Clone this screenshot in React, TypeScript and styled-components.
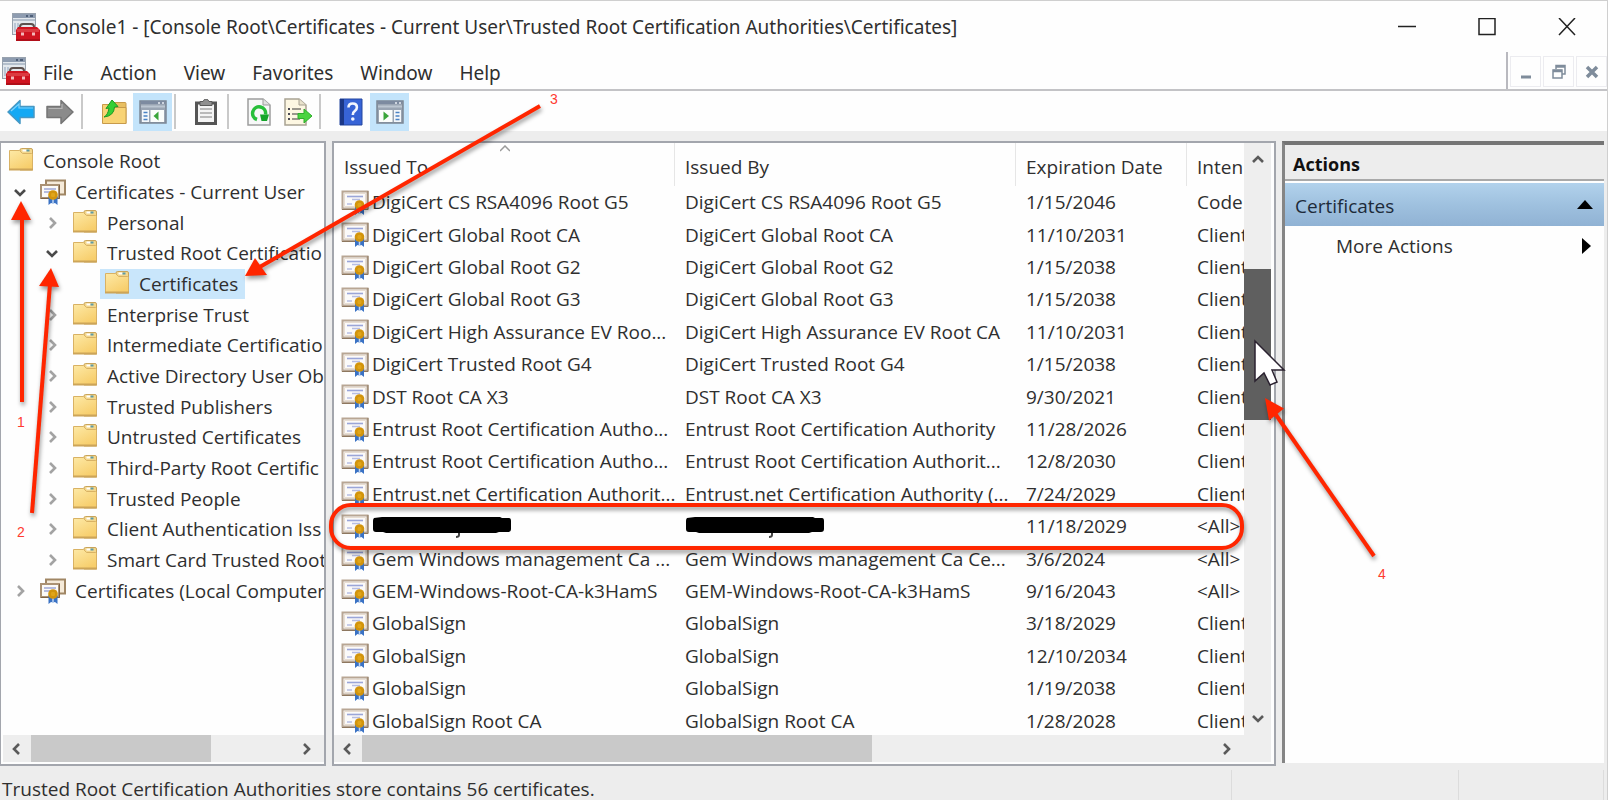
import React from "react";
import styled, { createGlobalStyle, css } from "styled-components";

const GlobalStyle = createGlobalStyle`
  * { box-sizing: border-box; }
  body { margin: 0; background: #ededed; }
  button { font: inherit; color: inherit; border: 0; padding: 0; margin: 0; background: none; }
  svg { display: block; flex: none; }
`;

const Shell = styled.div`
  position: relative;
  display: flex;
  flex-direction: column;
  min-height: 100vh;
  overflow: hidden;
  background: #ededed;
  color: #2f2f2f;
  border-top: 1px solid #cfcfcf;
  border-right: 1px solid #cfcfcf;
  font-family: "Open Sans", "Noto Sans", sans-serif;
  font-size: 19px;
  line-height: 26px;
  white-space: nowrap;
`;

const TitleBar = styled.header`
  display: flex;
  align-items: center;
  height: 51px;
  padding-left: 12px;
  background: #fefefe;
  font-family: "Noto Sans", sans-serif;
`;

const Title = styled.h1`
  flex: 1;
  margin: 0;
  padding: 1px 0 0 5px;
  font-size: 19px;
  font-weight: 400;
`;

const CaptionButton = styled.button`
  display: grid;
  place-items: center;
  width: 80px;
  height: 50px;
`;

const MenuBar = styled.nav`
  display: flex;
  align-items: center;
  height: 39px;
  padding-left: 2px;
  background: #fefefe;
  border-bottom: 2px solid #c3c3c6;
  font-family: "Noto Sans", sans-serif;
`;

const MenuItems = styled.div`
  flex: 1;
  display: flex;
  gap: 1px;
  padding-top: 4px;
`;

const MenuItem = styled.button`
  padding: 0 13px;
`;

const ChildWindowButtons = styled.div`
  display: flex;
  align-self: stretch;
  align-items: center;
  gap: 2px;
  padding: 2px 0 0 2px;
  border-left: 2px solid #b9b9bf;
`;

const ChildWindowButton = styled.button`
  display: grid;
  place-items: center;
  width: 31px;
  height: 31px;
  border: 1px solid #ececf0;
`;

const ToolBar = styled.div`
  display: flex;
  align-items: center;
  height: 40px;
  padding: 1px 2px 0 1px;
  background: #fefefe;
`;

const ToolButton = styled.button<{ $on?: boolean }>`
  display: grid;
  place-items: center;
  width: 39px;
  height: 38px;
  background: ${(p) => (p.$on ? "#c3e4fb" : "none")};
`;

const ToolDivider = styled.span<{ $after?: number }>`
  width: 2px;
  height: 35px;
  margin: 0 ${(p) => p.$after ?? 10}px 0 2px;
  background: #c9c9c9;
`;

const Panes = styled.main`
  flex: 1;
  display: grid;
  grid-template-columns: 326px minmax(0, 1fr) 322px;
  gap: 6px;
  padding: 10px 3px 2px 0;
`;

const TreePane = styled.section`
  display: flex;
  flex-direction: column;
  min-width: 0;
  padding: 3px 0 2px 2px;
  background: #fefefe;
  border: 2px solid #a3a6ad;
  border-left-width: 1px;
  overflow: hidden;
`;

const Tree = styled.ul`
  display: flex;
  flex-direction: column;
  height: 460px;
  margin: 0 0 auto;
  padding: 0;
  list-style: none;
  overflow: hidden;
`;

const TreeRow = styled.li<{ $level: number }>`
  flex: 1;
  display: flex;
  align-items: center;
  padding-left: ${(p) => p.$level * 32 + 1}px;
`;

const TreeToggle = styled.button`
  display: grid;
  place-items: center;
  flex: none;
  width: 24px;
  height: 24px;
  margin: 0 4px 0 -28px;
`;

const TreeLabel = styled.button<{ $selected?: boolean }>`
  flex: none;
  display: flex;
  align-items: center;
  align-self: stretch;
  gap: 8px;
  padding: 0 7px 0 3px;
  background: ${(p) => (p.$selected ? "#c9e6fb" : "none")};
`;

const HScroll = styled.div`
  display: flex;
  align-items: stretch;
  height: 27px;
  padding-right: 4px;
  background: #eeeeee;
`;

const ScrollArrow = styled.button<{ $tall?: boolean }>`
  display: grid;
  place-items: center;
  width: ${(p) => (p.$tall ? 27 : 28)}px;
  height: ${(p) => (p.$tall ? 34 : 27)}px;
`;

const HTrack = styled.div`
  flex: 1;
`;

const HThumb = styled.div<{ $share: number }>`
  width: ${(p) => p.$share}%;
  height: 27px;
  background: #c9c9c9;
`;

const ListPane = styled.section`
  display: grid;
  grid-template-columns: minmax(0, 1fr) 27px;
  grid-template-rows: minmax(0, 1fr) 27px;
  min-width: 0;
  padding: 0 3px 2px 0;
  background: #fefefe;
  border: 2px solid #a3a6ad;
`;

const TableClip = styled.div`
  height: 592px;
  overflow: hidden;
`;

const CertTable = styled.table`
  width: 100%;
  height: 594px;
  table-layout: fixed;
  border-collapse: separate;
  border-spacing: 0;
`;

const Column = styled.col<{ $width?: number }>`
  ${(p) => p.$width && css`width: ${p.$width}px;`}
`;

const HeadCell = styled.th`
  position: relative;
  height: 43px;
  padding: 4px 0 0 10px;
  font-weight: 400;
  text-align: left;
  overflow: hidden;
  border-right: 1px solid #e6e6e6;
  &:last-child { border-right: 0; }
`;

const SortMark = styled.svg`
  position: absolute;
  top: 2px;
  left: 50%;
  margin-left: -4px;
`;

const Cell = styled.td`
  padding: 0 0 0 10px;
  overflow: hidden;
`;

const NameCell = styled(Cell)`
  padding-left: 7px;
`;

const NameContent = styled.div`
  display: flex;
  align-items: center;
  gap: 3px;
`;

const VScroll = styled.div`
  display: flex;
  flex-direction: column;
  background: #eeeeee;
`;

const VTrack = styled.div`
  flex: 1;
  padding-top: 92px;
`;

const VThumb = styled.div`
  height: 151px;
  background: #5f5f5f;
`;

const ScrollCorner = styled.div`
  background: #eeeeee;
`;

const ActionsPane = styled.aside`
  display: flex;
  flex-direction: column;
  background: #fefefe;
  border-top: 4px solid #757575;
  border-left: 3px solid #858585;
  margin-bottom: 3px;
`;

const ActionsHeading = styled.h2`
  margin: 0 0 2px;
  padding: 6px 8px 2px;
  background: #ededed;
  border-bottom: 2px solid #a9a9a9;
  font-size: 18px;
  line-height: 26px;
  font-weight: 700;
  color: #111;
`;

const ActionsGroup = styled.button`
  display: flex;
  align-items: center;
  justify-content: space-between;
  height: 43px;
  padding: 2px 11px 0 10px;
  color: #1d2b3a;
  background: linear-gradient(#b2d2ec, #9fc1df 50%, #90b2d4);
`;

const ActionsItem = styled.button`
  display: flex;
  align-items: center;
  justify-content: space-between;
  height: 40px;
  padding: 0 13px 0 51px;
`;

const StatusBar = styled.footer`
  display: flex;
  height: 32px;
  padding: 2px 3px 0 0;
`;

const StatusPart = styled.div<{ $width?: number }>`
  ${(p) => (p.$width ? css`width: ${p.$width}px;` : css`flex: 1;`)}
  padding: 8px 0 0 2px;
  line-height: 22px;
  border-right: 1px solid #dcdcdc;
`;

const Annotations = styled.div`
  position: absolute;
  inset: -1px 0 0 0;
  pointer-events: none;
  overflow: hidden;
`;

const ArrowLayer = styled.svg`
  filter: drop-shadow(1px 3px 2px rgba(0, 0, 0, 0.4));
`;

const StepNumber = styled.span<{ $x: number; $y: number }>`
  position: absolute;
  left: ${(p) => p.$x}px;
  top: ${(p) => p.$y}px;
  font: 14px/16px "Liberation Sans", sans-serif;
  color: #ff3b30;
`;

const Pointer = styled.svg`
  position: absolute;
  left: 1253px;
  top: 339px;
`;

function ConsoleIcon() {
  return (
    <svg width="28" height="28" viewBox="0 0 28 28" aria-hidden="true">
      <rect x="0.5" y="0.5" width="23" height="21" fill="#e3e8ed" stroke="#98a2ae" />
      <rect x="1" y="1" width="22" height="4" fill="#8e9cb0" />
      <path d="M14 3h2M18 3h3" stroke="#4f6079" strokeWidth="2" />
      <path d="M1 7h22" stroke="#b4bfcc" strokeWidth="2" />
      <path d="M3 10v9M6 10v9" stroke="#8fa3bd" strokeWidth="1" />
      <path d="M8 17v-3q0-3 3-3h8q3 0 3 3v3" fill="none" stroke="#5c504d" strokeWidth="2" />
      <path d="M4 17l2-3h19l3 3v11H4z" fill="#cf1420" />
      <path d="M5 16h22v3H5z" fill="#dc3a40" />
      <path d="M4 26h24v2H4z" fill="#b00f19" />
      <path d="M9 19.500h3v3H9zM20 19.500h3v3h-3z" fill="#f3b9b9" />
    </svg>
  );
}

function FolderIcon() {
  return (
    <svg width="28" height="28" viewBox="0 0 28 28" aria-hidden="true">
      <defs>
        <linearGradient id="folder" x1="0" y1="0" x2="0.600" y2="1">
          <stop offset="0" stopColor="#fde9a6" />
          <stop offset="1" stopColor="#f7ce6c" />
        </linearGradient>
      </defs>
      <path d="M13 5V3q0-1.500 1.500-1.500h9.500q1.500 0 1.500 1.500v20H13z" fill="#f3d78c" stroke="#c9a45a" />
      <path d="M15.500 3.500h4" stroke="#fff" strokeWidth="2" />
      <path d="M19.500 3.500h3" stroke="#5d9aa6" strokeWidth="2" />
      <path d="M2.500 3.500h10l3 3h9q1 0 1 1V22.500h-23z" fill="url(#folder)" stroke="#d9b264" />
      <path d="M2 22.500h24" stroke="#cda558" strokeWidth="2" />
    </svg>
  );
}

function Ribbon({ x, y }: { x: number; y: number }) {
  return (
    <g transform={`translate(${x} ${y})`}>
      <path d="M-4.500 1h9v9l-2.500-2-2 .500-2-.500-2.500 2z" fill="#3a72c4" />
      <path d="M0 3v6" stroke="#bcd3f2" strokeWidth="1.500" />
      <circle r="4.800" fill="#d2940c" />
      <circle r="2.200" fill="#e0a51a" />
    </g>
  );
}

function CertIcon() {
  return (
    <svg width="28" height="25" viewBox="0 0 28 25" aria-hidden="true">
      <path d="M1.500 1.500h25v17h-25z" fill="#fbfaf9" stroke="#b8a694" strokeWidth="2" />
      <path d="M27 1v18.500H1" fill="none" stroke="#8d775f" strokeWidth="1" />
      <path d="M3.500 3.500h21v13h-21z" fill="none" stroke="#e8ddd2" />
      <path d="M6 6.500h16" stroke="#9aa5d8" strokeWidth="1.600" />
      <path d="M11 9.500h8M6 14h5" stroke="#b6bde2" strokeWidth="1.600" />
      <Ribbon x={18.500} y={15} />
    </svg>
  );
}

function CertStoreIcon() {
  return (
    <svg width="28" height="28" viewBox="0 0 28 28" aria-hidden="true">
      <path d="M7 2.500h19v14H7z" fill="#f5ead9" stroke="#a08664" strokeWidth="2" />
      <path d="M2 7h18v13H2z" fill="#fcfaf7" stroke="#ab9274" strokeWidth="2" />
      <path d="M20.500 7v13.500H2" fill="none" stroke="#7d6244" strokeWidth="1" />
      <path d="M5 11h12M5 14h6" stroke="#9fa8d6" strokeWidth="1.500" />
      <Ribbon x={14} y={17} />
    </svg>
  );
}

type Direction = "up" | "down" | "left" | "right";
const chevrons: Record<Direction, string> = {
  up: "M2 9l5-5 5 5",
  down: "M2 5l5 5 5-5",
  left: "M9 2L4 7l5 5",
  right: "M5 2l5 5-5 5",
};

function Chevron({ to, color = "#5a5a5a" }: { to: Direction; color?: string }) {
  return (
    <svg width="14" height="14" viewBox="0 0 14 14" aria-hidden="true">
      <path d={chevrons[to]} fill="none" stroke={color} strokeWidth="2.600" />
    </svg>
  );
}

function BackIcon() {
  return (
    <svg width="28" height="26" viewBox="0 0 28 26" aria-hidden="true">
      <path d="M1 13L13 1.500V7.500h14v11H13v6z" fill="#14a9f4" stroke="#4798c4" strokeWidth="1.500" strokeLinejoin="round" />
      <path d="M4 12l8-7v4h14" fill="none" stroke="#7fd2fb" strokeWidth="1.200" />
    </svg>
  );
}

function ForwardIcon() {
  return (
    <svg width="28" height="26" viewBox="0 0 28 26" aria-hidden="true">
      <path d="M27 13L15 1.500V7.500H1v11h14v6z" fill="#8b8b8b" stroke="#757575" strokeWidth="1.500" strokeLinejoin="round" />
      <path d="M2.500 9.500H16V5" fill="none" stroke="#b5b5b5" strokeWidth="1.200" />
    </svg>
  );
}

function UpFolderIcon() {
  return (
    <svg width="26" height="26" viewBox="0 0 26 26" aria-hidden="true">
      <path d="M13 3.500h11q1 0 1 1v20H13z" fill="#e8bf62" stroke="#c79a4b" />
      <path d="M1.500 5.500h10l2 3h11.500v16H1.500z" fill="#f8d375" stroke="#c79a4b" />
      <path d="M3 18q4-2 5-9l-3 .500L11 1l6 6.500-3.500 .500Q13 17 3 18z" fill="#35cf35" stroke="#1d9a22" />
    </svg>
  );
}

function PanelIcon({ side }: { side: "left" | "right" }) {
  const left = side === "left";
  return (
    <svg width="28" height="24" viewBox="0 0 28 24" aria-hidden="true">
      <path d="M1 1h26v22H1z" fill="#9aa5b3" stroke="#7c8795" strokeWidth="1.500" />
      <path d="M2 2.500h24" stroke="#7d8ba0" strokeWidth="3" />
      <path d="M19 3h2M23 3h2" stroke="#e9eef4" strokeWidth="1.500" />
      <path d="M2 6.500h24" stroke="#bcc6d1" strokeWidth="2" />
      <path d={left ? "M3 10h7v12H3z" : "M18 10h7v12h-7z"} fill="#f4f7fa" />
      <path d={left ? "M11.500 10H25v12H11.500z" : "M3 10h13.500v12H3z"} fill="#fbfdfb" />
      <path d={left ? "M4.500 12.500h4M4.500 16h4M4.500 19.500h4" : "M19.500 12.500h4M19.500 16h4M19.500 19.500h4"} stroke="#4a82c4" strokeWidth="1.600" />
      <path d={left ? "M19.500 11.500v9l-5-4.500z" : "M7.500 11.500v9l5.500-4.500z"} fill="#3aa53a" />
    </svg>
  );
}

function ClipboardIcon() {
  return (
    <svg width="22" height="26" viewBox="0 0 22 26" aria-hidden="true">
      <path d="M1.500 4h19v20.500h-19z" fill="#f4f4f4" stroke="#555" strokeWidth="3" />
      <path d="M5 4.500V2.500h3Q9 0 11 0t3 2.500h3v4H5z" fill="#8f8f8f" stroke="#5a5a5a" />
      <path d="M5 10h12M5 14h12M5 18h12" stroke="#a5a5a5" strokeWidth="1.500" />
    </svg>
  );
}

function RefreshIcon() {
  return (
    <svg width="24" height="28" viewBox="0 0 24 28" aria-hidden="true">
      <path d="M1 1h15l7 6v20H1z" fill="#f7f8f8" stroke="#9d9d9d" strokeWidth="1.500" />
      <path d="M16 1v6h7" fill="#e1e1e1" stroke="#9d9d9d" />
      <path d="M10 21.500a6.500 6.500 0 1 1 8.500-5" fill="none" stroke="#27bf3a" strokeWidth="3.500" />
      <path d="M13 16.500l9 0-2 6.500h-5.500z" fill="#15a52a" />
    </svg>
  );
}

function ExportIcon() {
  return (
    <svg width="28" height="28" viewBox="0 0 28 28" aria-hidden="true">
      <path d="M1 1h14l7 6v20H1z" fill="#fdf7e2" stroke="#a8a293" strokeWidth="1.500" />
      <path d="M15 1v6h7" fill="#e9e2cc" stroke="#a8a293" />
      <path d="M4 11h2M4 16h2M4 21h2" stroke="#4a4a55" strokeWidth="2" />
      <path d="M8 11h9M8 16h6M8 21h8" stroke="#9b978c" strokeWidth="1.800" />
      <path d="M14 15.500h6V11l8 7-8 7v-4.500h-6z" fill="#4bd43f" stroke="#2fae2c" />
    </svg>
  );
}

function HelpIcon() {
  return (
    <svg width="24" height="28" viewBox="0 0 24 28" aria-hidden="true">
      <path d="M1 1h22v26H1z" fill="#3763d6" stroke="#24479f" />
      <path d="M1 1h4v26H1z" fill="#1b3787" />
      <path d="M9.500 9.500q0-4 4.200-4t4.200 3.800q0 2.500-2.200 3.900-1.900 1.200-1.900 3.800" fill="none" stroke="#f3f6ff" strokeWidth="2.600" />
      <circle cx="13.800" cy="21" r="1.800" fill="#f3f6ff" />
    </svg>
  );
}

function Redaction() {
  return (
    <svg width="142" height="26" viewBox="0 0 142 26" role="img" aria-label="Redacted">
      <path d="M87 19v3q0 2-3 2" fill="none" stroke="#444" strokeWidth="2" />
      <path d="M2 5l8-1h118l2 1h7q2 0 2 3v8q0 3-3 3h-9l-3 1H14l-3-1H4q-3 0-3-3V8q0-2 1-3z" fill="#000" />
    </svg>
  );
}

type Node = { text: string; level: number; kind?: "store"; open?: boolean; closed?: boolean; selected?: boolean };
const nodes: Node[] = [
  { text: "Console Root", level: 0 },
  { text: "Certificates - Current User", level: 1, kind: "store", open: true },
  { text: "Personal", level: 2, closed: true },
  { text: "Trusted Root Certificatio", level: 2, open: true },
  { text: "Certificates", level: 3, selected: true },
  { text: "Enterprise Trust", level: 2, closed: true },
  { text: "Intermediate Certificatio", level: 2, closed: true },
  { text: "Active Directory User Ob", level: 2, closed: true },
  { text: "Trusted Publishers", level: 2, closed: true },
  { text: "Untrusted Certificates", level: 2, closed: true },
  { text: "Third-Party Root Certific", level: 2, closed: true },
  { text: "Trusted People", level: 2, closed: true },
  { text: "Client Authentication Iss", level: 2, closed: true },
  { text: "Smart Card Trusted Root", level: 2, closed: true },
  { text: "Certificates (Local Computer)", level: 1, kind: "store", closed: true },
];

const certificates: [string | null, string | null, string, string][] = [
  ["DigiCert CS RSA4096 Root G5", "DigiCert CS RSA4096 Root G5", "1/15/2046", "Code"],
  ["DigiCert Global Root CA", "DigiCert Global Root CA", "11/10/2031", "Client"],
  ["DigiCert Global Root G2", "DigiCert Global Root G2", "1/15/2038", "Client"],
  ["DigiCert Global Root G3", "DigiCert Global Root G3", "1/15/2038", "Client"],
  ["DigiCert High Assurance EV Roo...", "DigiCert High Assurance EV Root CA", "11/10/2031", "Client"],
  ["DigiCert Trusted Root G4", "DigiCert Trusted Root G4", "1/15/2038", "Client"],
  ["DST Root CA X3", "DST Root CA X3", "9/30/2021", "Client"],
  ["Entrust Root Certification Autho...", "Entrust Root Certification Authority", "11/28/2026", "Client"],
  ["Entrust Root Certification Autho...", "Entrust Root Certification Authorit...", "12/8/2030", "Client"],
  ["Entrust.net Certification Authorit...", "Entrust.net Certification Authority (...", "7/24/2029", "Client"],
  [null, null, "11/18/2029", "<All>"],
  ["Gem Windows management Ca ...", "Gem Windows management Ca Ce...", "3/6/2024", "<All>"],
  ["GEM-Windows-Root-CA-k3HamS", "GEM-Windows-Root-CA-k3HamS", "9/16/2043", "<All>"],
  ["GlobalSign", "GlobalSign", "3/18/2029", "Client"],
  ["GlobalSign", "GlobalSign", "12/10/2034", "Client"],
  ["GlobalSign", "GlobalSign", "1/19/2038", "Client"],
  ["GlobalSign Root CA", "GlobalSign Root CA", "1/28/2028", "Client"],
];

export default function App() {
  return (
    <>
      <GlobalStyle />
      <Shell>
        <TitleBar>
          <ConsoleIcon />
          <Title>Console1 - [Console Root\Certificates - Current User\Trusted Root Certification Authorities\Certificates]</Title>
          <CaptionButton aria-label="Minimize">
            <svg width="18" height="18"><path d="M0 8.500h18" stroke="#222" strokeWidth="1.500" /></svg>
          </CaptionButton>
          <CaptionButton aria-label="Maximize">
            <svg width="18" height="18"><path d="M1 .500h16v16H1z" fill="none" stroke="#222" strokeWidth="1.500" /></svg>
          </CaptionButton>
          <CaptionButton aria-label="Close">
            <svg width="18" height="18"><path d="M1 0l16 17M17 0L1 17" stroke="#222" strokeWidth="1.500" /></svg>
          </CaptionButton>
        </TitleBar>

        <MenuBar>
          <ConsoleIcon />
          <MenuItems>
            {["File", "Action", "View", "Favorites", "Window", "Help"].map((m) => (
              <MenuItem key={m}>{m}</MenuItem>
            ))}
          </MenuItems>
          <ChildWindowButtons>
            <ChildWindowButton aria-label="Minimize console">
              <svg width="16" height="16"><path d="M3 13h10" stroke="#7f8c9b" strokeWidth="3" /></svg>
            </ChildWindowButton>
            <ChildWindowButton aria-label="Restore console">
              <svg width="16" height="16" fill="none" stroke="#7f8c9b" strokeWidth="1.500">
                <path d="M5 5V1.500h9V10h-3" />
                <path d="M5 2.500h9" strokeWidth="2.500" />
                <path d="M2 6h9v8H2z" fill="#fefefe" />
                <path d="M2 7h9" strokeWidth="2.500" />
              </svg>
            </ChildWindowButton>
            <ChildWindowButton aria-label="Close console">
              <svg width="16" height="16"><path d="M3 3l10 10M13 3L3 13" stroke="#7f8c9b" strokeWidth="3.500" /></svg>
            </ChildWindowButton>
          </ChildWindowButtons>
        </MenuBar>

        <ToolBar>
          <ToolButton aria-label="Back"><BackIcon /></ToolButton>
          <ToolButton aria-label="Forward"><ForwardIcon /></ToolButton>
          <ToolDivider $after={11} />
          <ToolButton aria-label="Up one level"><UpFolderIcon /></ToolButton>
          <ToolButton aria-label="Show console tree" $on><PanelIcon side="left" /></ToolButton>
          <ToolDivider />
          <ToolButton aria-label="Copy"><ClipboardIcon /></ToolButton>
          <ToolDivider />
          <ToolButton aria-label="Refresh"><RefreshIcon /></ToolButton>
          <ToolButton aria-label="Export list"><ExportIcon /></ToolButton>
          <ToolDivider />
          <ToolButton aria-label="Help"><HelpIcon /></ToolButton>
          <ToolButton aria-label="Show action pane" $on><PanelIcon side="right" /></ToolButton>
        </ToolBar>

        <Panes>
          <TreePane>
            <Tree>
              {nodes.map((n) => (
                <TreeRow key={n.text + n.level} $level={n.level}>
                  {(n.open || n.closed) && (
                    <TreeToggle aria-label={n.open ? "Collapse" : "Expand"}>
                      <Chevron to={n.open ? "down" : "right"} color={n.open ? "#4a4a4a" : "#a3a3a3"} />
                    </TreeToggle>
                  )}
                  <TreeLabel $selected={n.selected}>
                    {n.kind === "store" ? <CertStoreIcon /> : <FolderIcon />}
                    {n.text}
                  </TreeLabel>
                </TreeRow>
              ))}
            </Tree>
            <HScroll>
              <ScrollArrow aria-label="Scroll tree left"><Chevron to="left" /></ScrollArrow>
              <HTrack><HThumb $share={69} /></HTrack>
              <ScrollArrow aria-label="Scroll tree right"><Chevron to="right" /></ScrollArrow>
            </HScroll>
          </TreePane>

          <ListPane>
            <TableClip>
              <CertTable>
                <colgroup>
                  <Column $width={341} />
                  <Column />
                  <Column $width={171} />
                  <Column $width={57} />
                </colgroup>
                <thead>
                  <tr>
                    <HeadCell>
                      Issued To
                      <SortMark width="10" height="7"><path d="M0 6l5-5 5 5" fill="none" stroke="#9a9a9a" strokeWidth="1.500" /></SortMark>
                    </HeadCell>
                    <HeadCell>Issued By</HeadCell>
                    <HeadCell>Expiration Date</HeadCell>
                    <HeadCell>Inten</HeadCell>
                  </tr>
                </thead>
                <tbody>
                  {certificates.map(([to, by, date, use], i) => (
                    <tr key={i}>
                      <NameCell>
                        <NameContent><CertIcon />{to ?? <Redaction />}</NameContent>
                      </NameCell>
                      <Cell>{by ?? <Redaction />}</Cell>
                      <Cell>{date}</Cell>
                      <Cell>{use}</Cell>
                    </tr>
                  ))}
                </tbody>
              </CertTable>
            </TableClip>
            <VScroll>
              <ScrollArrow $tall aria-label="Scroll list up"><Chevron to="up" /></ScrollArrow>
              <VTrack><VThumb /></VTrack>
              <ScrollArrow $tall aria-label="Scroll list down"><Chevron to="down" /></ScrollArrow>
            </VScroll>
            <HScroll>
              <ScrollArrow aria-label="Scroll list left"><Chevron to="left" /></ScrollArrow>
              <HTrack><HThumb $share={60} /></HTrack>
              <ScrollArrow aria-label="Scroll list right"><Chevron to="right" /></ScrollArrow>
            </HScroll>
            <ScrollCorner />
          </ListPane>

          <ActionsPane>
            <ActionsHeading>Actions</ActionsHeading>
            <ActionsGroup>
              Certificates
              <svg width="16" height="16" aria-hidden="true"><path d="M0 11l8-9 8 9z" fill="#000" /></svg>
            </ActionsGroup>
            <ActionsItem>
              More Actions
              <svg width="9" height="16" aria-hidden="true"><path d="M0 0l9 8-9 8z" fill="#000" /></svg>
            </ActionsItem>
          </ActionsPane>
        </Panes>

        <StatusBar>
          <StatusPart>Trusted Root Certification Authorities store contains 56 certificates.</StatusPart>
          <StatusPart $width={227} />
          <StatusPart $width={145} />
        </StatusBar>

        <Annotations>
          <ArrowLayer width="1608" height="800" fill="#ff2600" stroke="#ff2600" strokeWidth="4">
            <rect x="331" y="505" width="911" height="43" rx="20" fill="none" />
            <path d="M22 402V216" />
            <path d="M32 513L50 284" />
            <path d="M540 106L258 268" />
            <path d="M1374 556L1274 412" />
            <g stroke="none">
              <path d="M21 201l10 19H11z" />
              <path d="M51 268l8 19-20-1z" />
              <path d="M245 276l10-18 12 17z" />
              <path d="M1265 398l19 10.500-15 12z" />
            </g>
          </ArrowLayer>
          <StepNumber $x={17} $y={414}>1</StepNumber>
          <StepNumber $x={17} $y={524}>2</StepNumber>
          <StepNumber $x={550} $y={91}>3</StepNumber>
          <StepNumber $x={1378} $y={566}>4</StepNumber>
          <Pointer width="34" height="52" viewBox="0 0 34 52" aria-hidden="true">
            <path d="M2 2v40l9-8 6 12 7-3-5-12h12z" fill="#fff" stroke="#2b2230" strokeWidth="1.500" />
          </Pointer>
        </Annotations>
      </Shell>
    </>
  );
}
